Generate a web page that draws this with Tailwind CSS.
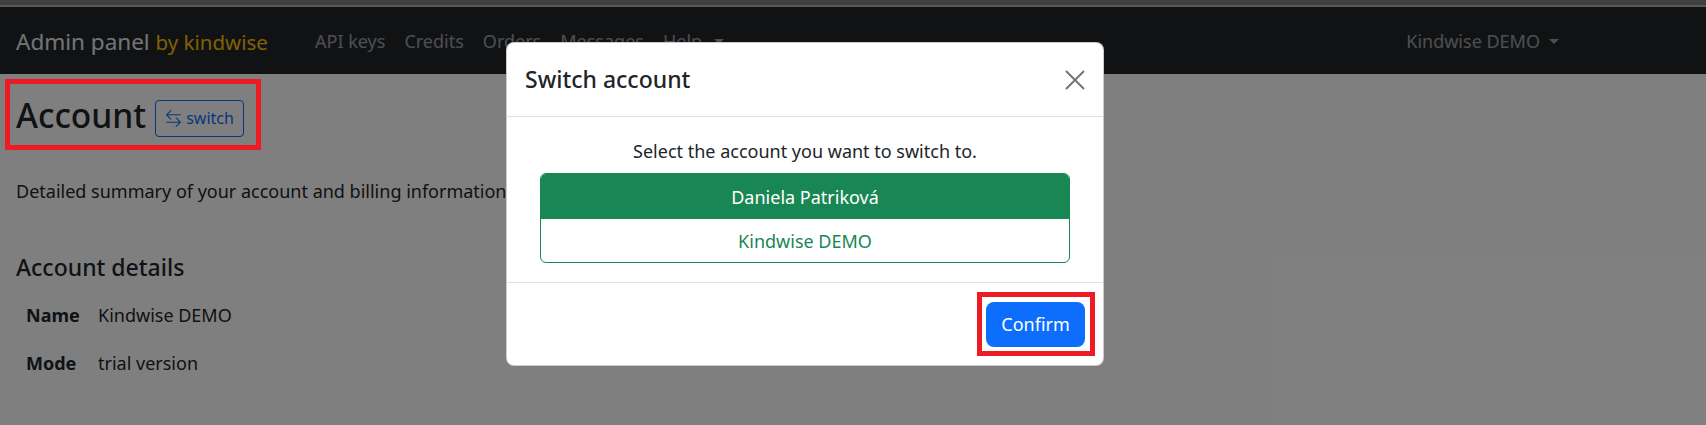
<!DOCTYPE html>
<html lang="en">
<head>
    <meta charset="UTF-8">
    <meta name="viewport" content="width=device-width, initial-scale=1.0">
    <title>Admin panel by kindwise</title>
    <script src="https://cdn.jsdelivr.net/npm/@tailwindcss/browser@4"></script>
</head>
<body class="relative h-[425px] overflow-hidden bg-white text-[#212529] font-['Noto_Sans','Open_Sans',sans-serif] text-[18px]">
    <!-- page behind the dialog -->
    <div class="h-[5px] bg-[#808080]"></div>
    <div class="h-[2px] bg-[#b0b0b0]"></div>
    <nav class="flex items-center h-[67px] bg-[#212529] pl-4">
        <a class="text-[22.5px] pt-[3px] text-white/90 w-[299px] whitespace-nowrap">Admin panel <span class="text-[20.5px] text-[#ffc107]">by kindwise</span></a>
        <ul class="flex items-center gap-[19px] pt-[2px] text-white/55">
            <li>API keys</li>
            <li>Credits</li>
            <li>Orders</li>
            <li>Messages</li>
            <li class="flex items-center gap-[12px]">Help <span class="border-x-[5px] border-t-[5px] border-x-transparent border-t-white/55"></span></li>
        </ul>
        <div class="ml-auto mr-[147px] pt-[2px] flex items-center gap-[9px] text-white/55">Kindwise DEMO <span class="border-x-[5px] border-t-[5px] border-x-transparent border-t-white/55"></span></div>
    </nav>
    <main class="pl-4">
        <div class="flex items-center gap-[9px] h-[76px] pt-[6px]">
            <h1 class="text-[33.5px] font-medium">Account</h1>
            <button class="flex items-center gap-[4px] h-[37px] px-[9px] mt-[6px] rounded-[4px] border border-[#0d6efd] text-[#0d6efd] text-[16px]">
                <svg class="w-[17px] h-[17px]" viewBox="0 0 16 16" fill="currentColor"><path fill-rule="evenodd" d="M1 11.5a.5.5 0 0 0 .5.5h11.793l-3.147 3.146a.5.5 0 0 0 .708.708l4-4a.5.5 0 0 0 0-.708l-4-4a.5.5 0 0 0-.708.708L13.293 11H1.5a.5.5 0 0 0-.5.5zm14-7a.5.5 0 0 1-.5.5H2.707l3.147 3.146a.5.5 0 1 1-.708.708l-4-4a.5.5 0 0 1 0-.708l4-4a.5.5 0 1 1 .708.708L2.707 4H14.5a.5.5 0 0 1 .5.5z"/></svg>
                switch
            </button>
        </div>
        <p class="mt-[28px] whitespace-nowrap">Detailed summary of your account and billing information</p>
        <h2 class="mt-[45px] text-[23px] font-medium">Account details</h2>
        <div class="grid grid-cols-[72px_1fr] gap-y-[21px] pl-[10px] mt-[17px]">
            <b class="font-bold">Name</b><span>Kindwise DEMO</span>
            <b class="font-bold">Mode</b><span>trial version</span>
        </div>
    </main>

    <!-- backdrop and dialog -->
    <div class="absolute inset-0 bg-black/50"></div>
    <div class="absolute left-[506px] top-[42px] w-[598px] h-[324px] flex flex-col bg-white rounded-[8px] border border-black/20">
        <div class="flex items-center justify-between h-[74px] pl-[18px] pr-[18px] border-b border-[#dee2e6]">
            <h5 class="text-[23px] font-medium">Switch account</h5>
            <svg class="w-[20px] h-[20px] text-[#757575]" viewBox="0 0 20 20" fill="none" stroke="currentColor" stroke-width="2"><path d="M1 1l18 18M19 1L1 19"/></svg>
        </div>
        <div class="flex-1 flex flex-col items-center pt-[22px] border-b border-[#dee2e6]">
            <p class="leading-[24px]">Select the account you want to switch to.</p>
            <div class="w-[530px] mt-[10px] rounded-[6px] border border-[#198754] overflow-hidden text-center">
                <div class="h-[45px] pt-[2px] flex items-center justify-center bg-[#198754] text-white">Daniela Patriková</div>
                <div class="h-[43px] pt-[2px] flex items-center justify-center text-[#198754]">Kindwise DEMO</div>
            </div>
        </div>
        <div class="flex justify-end items-center h-[82px] pr-[18px]">
            <button class="w-[99px] h-[45px] rounded-[8px] bg-[#0d6efd] text-white text-[18px]">Confirm</button>
        </div>
    </div>

    <!-- red annotation boxes -->
    <div class="absolute left-[5px] top-[79px] w-[256px] h-[71px] border-[5px] border-[#ed1c24]"></div>
    <div class="absolute left-[977px] top-[292px] w-[118px] h-[64px] border-[5px] border-[#ed1c24]"></div>
</body>
</html>
